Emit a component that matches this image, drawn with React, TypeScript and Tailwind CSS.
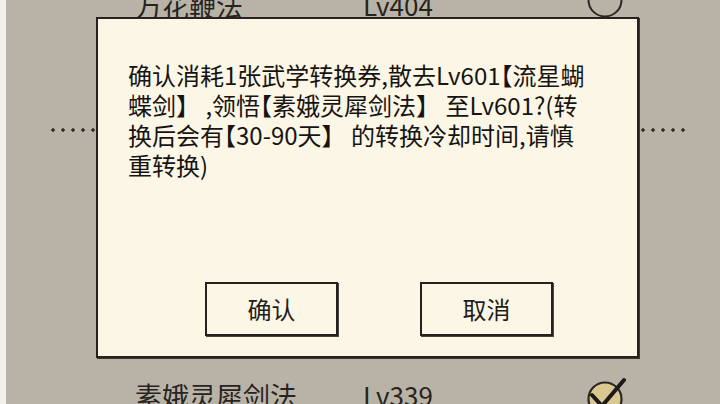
import React from "react";

const cjk = { fontFamily: '"Noto Sans CJK SC", "Noto Sans", sans-serif' };

function EmptyRing() {
  return (
    <svg width="36" height="36" viewBox="0 0 36 36" className="overflow-visible">
      <circle cx="18" cy="18" r="16.5" fill="#b9b3a7" stroke="#2a2724" strokeWidth="2" />
    </svg>
  );
}

function CheckedRing() {
  return (
    <svg width="36" height="36" viewBox="0 0 36 36" className="overflow-visible">
      <circle cx="18" cy="18" r="16.5" fill="#d9c88f" stroke="#2a2724" strokeWidth="2.2" />
      <path
        d="M5 14 L15 25 L37 -1"
        fill="none"
        stroke="#1d1b19"
        strokeWidth="4"
        strokeLinecap="round"
        strokeLinejoin="round"
      />
    </svg>
  );
}

function Row({
  name,
  level,
  checked,
  className,
  textClass,
}: {
  name: string;
  level: string;
  checked: boolean;
  className: string;
  textClass: string;
}) {
  return (
    <div className={`flex h-[40px] items-center pl-[129px] text-[#27241f] ${className}`}>
      <span className={`w-[228px] text-[27px] leading-none ${textClass}`}>{name}</span>
      <span className={`w-[224px] text-[26px] leading-none ${textClass}`}>{level}</span>
      <span className="flex w-[36px] items-center justify-center">
        {checked ? <CheckedRing /> : <EmptyRing />}
      </span>
    </div>
  );
}

function Button({ label }: { label: string }) {
  return (
    <button className="flex h-[54px] w-[133px] items-center justify-center border-2 border-[#24211e] bg-[#fcf6e6] text-[24px] leading-none text-[#1f1d1a] shadow-[1px_1px_0_#4a4640]">
      {label}
    </button>
  );
}

// opening bracket set half-width, as the dialog font draws it
function Open() {
  return <span className="[font-feature-settings:'halt']">【</span>;
}

export default function App() {
  return (
    <div className="relative flex h-[404px] w-[720px] overflow-hidden bg-[#b9b3a7]" style={cjk}>
      <div className="w-[6px] shrink-0 bg-[#f2f0eb]" />

      <div className="flex flex-1 flex-col">
        <Row name="万花鞭法" level="Lv404" checked={false} className="-mt-[20px]" textClass="mt-[10px]" />
        <div className="mt-[108px] ml-[42px] mr-[34px] h-[4px] bg-[radial-gradient(circle,#2f2c28_1.4px,transparent_2px)] bg-[length:10px_4px] bg-repeat-x" />
        <Row name="素娥灵犀剑法" level="Lv339" checked className="mt-auto -mb-[15px]" textClass="mb-[8px]" />
      </div>

      <div className="absolute left-[96px] top-[17px] flex h-[341px] w-[543px] flex-col border-2 border-[#26231f] bg-[#fcf6e6] shadow-[1px_1px_0_#3b3732]">
        <div className="pl-[30px] pt-[41px] text-[24px] leading-[30px] text-[#151412]">
          <div className="whitespace-pre">
            确认消耗1张武学转换券,散去Lv601<Open />流星蝴
          </div>
          <div className="whitespace-pre">
            蝶剑】 ,领悟<Open />素娥灵犀剑法】 至Lv601?(转
          </div>
          <div className="whitespace-pre">
            换后会有<Open />30-90天】 的转换冷却时间,请慎
          </div>
          <div className="whitespace-pre">重转换)</div>
        </div>
        <div className="mt-auto mb-[20px] flex gap-[82px] pl-[107px]">
          <Button label="确认" />
          <Button label="取消" />
        </div>
      </div>
    </div>
  );
}
